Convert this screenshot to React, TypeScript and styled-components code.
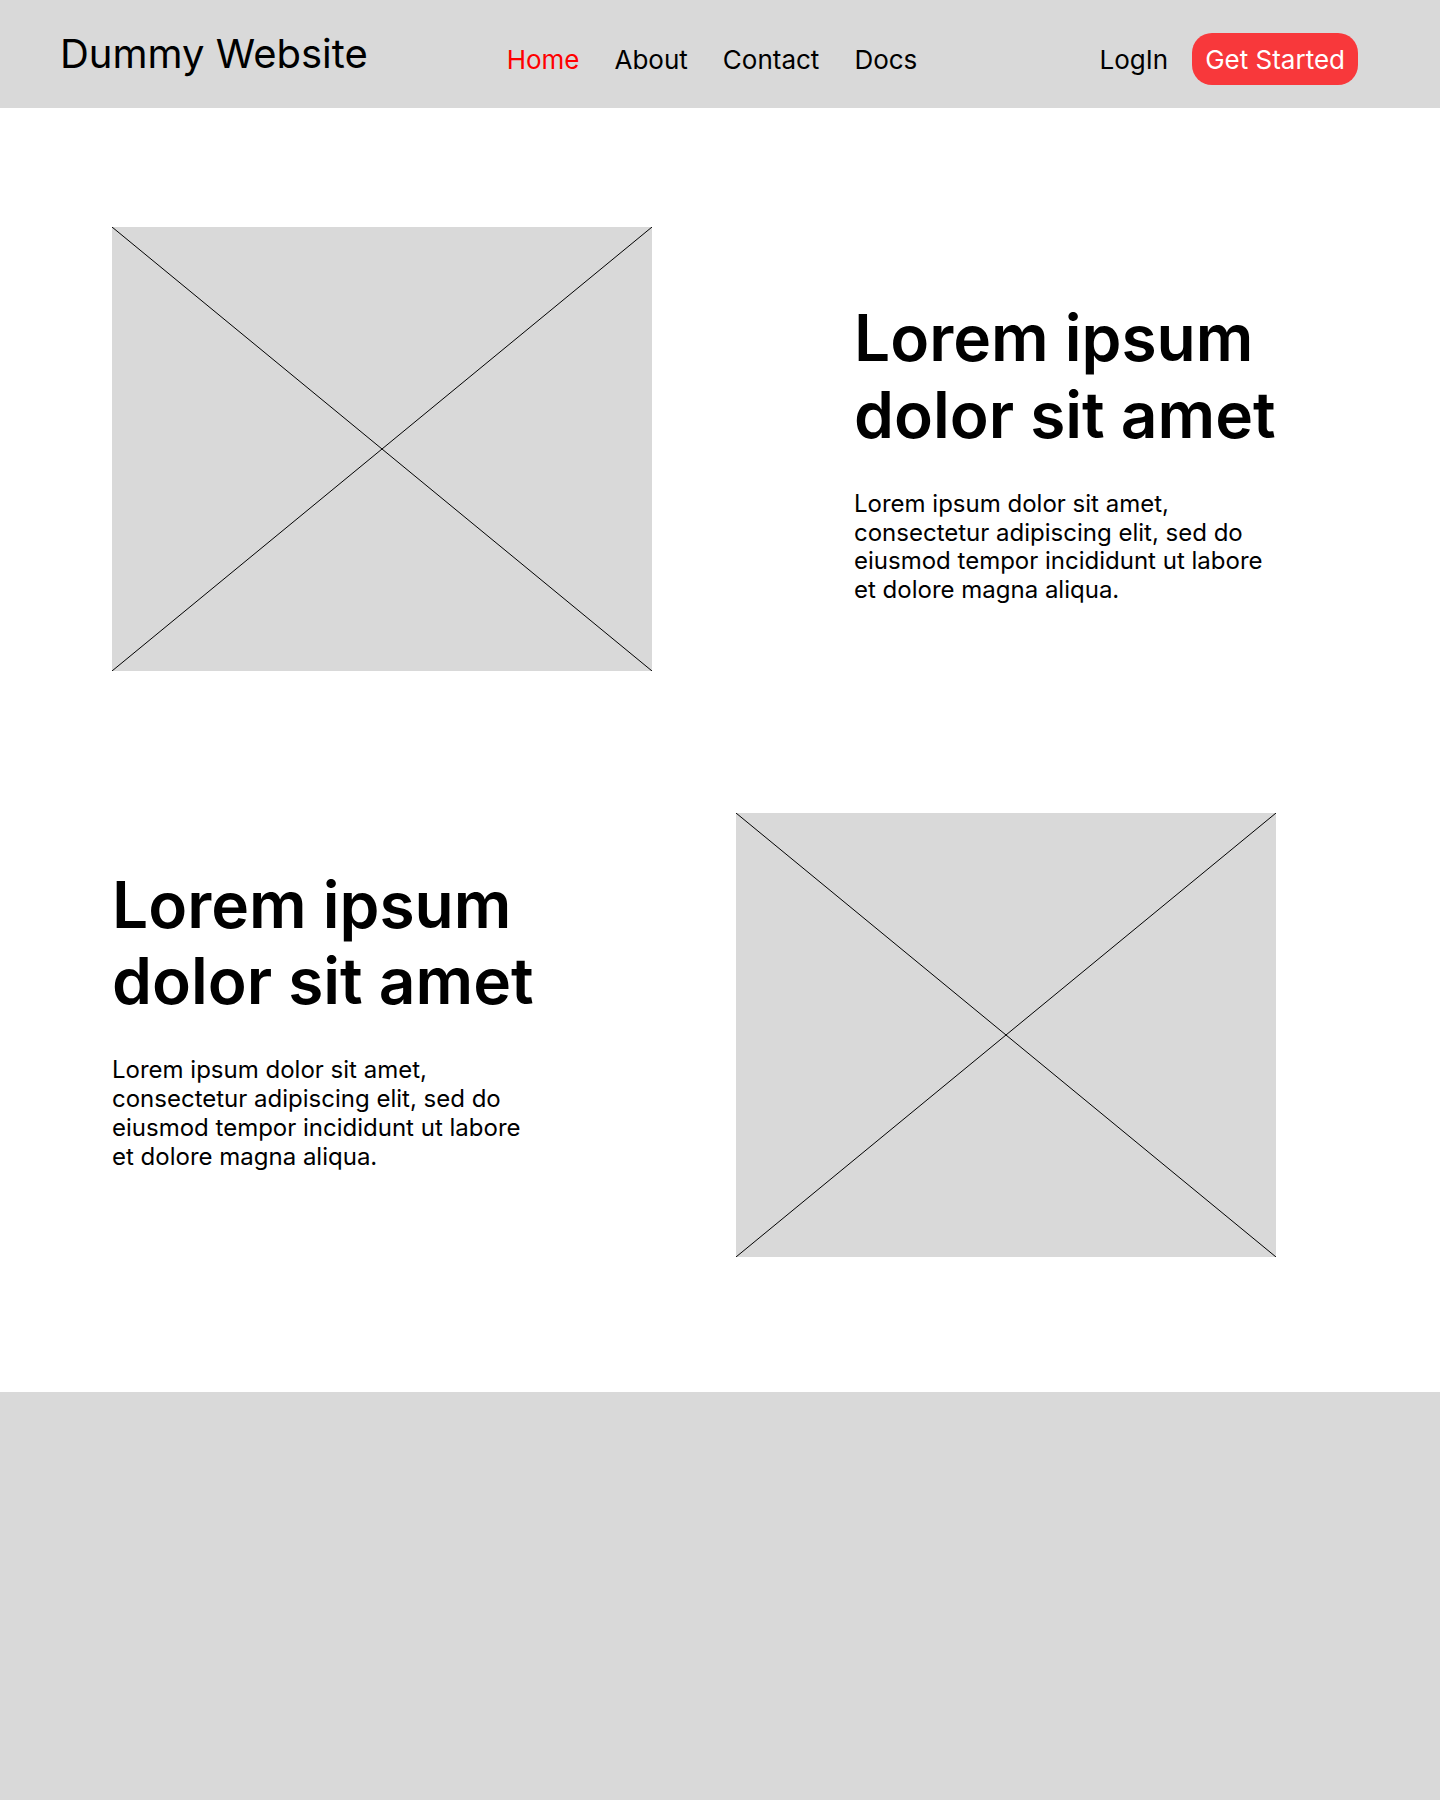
import styled, { createGlobalStyle } from 'styled-components';

const GlobalStyle = createGlobalStyle`
  * {
    box-sizing: border-box;
  }
  body {
    margin: 0;
    font-family: Inter, "Noto Sans", sans-serif;
    color: #000;
    background: #fff;
  }
`;

const Page = styled.div`
  display: flex;
  flex-direction: column;
  min-height: 1800px;
`;

const Header = styled.header`
  display: grid;
  grid-template-columns: 1fr auto 1fr;
  align-items: center;
  height: 108px;
  padding: 10px 82px 0 60px;
  background: #d9d9d9;
`;

const Logo = styled.div`
  font-size: 40px;
  font-weight: 400;
  margin-top: -12px;
`;

const Nav = styled.nav`
  display: flex;
  gap: 35px;
  margin-left: 6px;
`;

const NavLink = styled.a<{ $active?: boolean }>`
  font-size: 26px;
  color: ${({ $active }) => ($active ? '#ff0000' : '#000')};
  text-decoration: none;
  cursor: pointer;
`;

const Actions = styled.div`
  display: flex;
  align-items: center;
  justify-content: flex-end;
  gap: 24px;
`;

const LoginLink = styled.a`
  font-size: 26px;
  color: #000;
  cursor: pointer;
`;

const StartButton = styled.button`
  height: 52px;
  padding: 0 13px;
  border: none;
  border-radius: 20px;
  background: #f8383b;
  color: #fff;
  font-family: inherit;
  font-size: 26px;
  cursor: pointer;
`;

const Main = styled.main`
  display: flex;
  flex-direction: column;
  gap: 142px;
  padding: 119px 164px 135px 112px;
`;

const Row = styled.section`
  display: flex;
  align-items: center;
  justify-content: space-between;
`;

const Placeholder = styled.svg`
  display: block;
  width: 540px;
  height: 444px;
  flex-shrink: 0;
  background: #d9d9d9;
`;

// $lift moves the centred text block up (positive) or down (negative)
const TextBlock = styled.div<{ $lift?: number }>`
  width: 422px;
  margin-bottom: ${({ $lift = 0 }) => $lift * 2}px;
`;

const Heading = styled.h2`
  margin: 0 0 36px;
  font-size: 64px;
  font-weight: 600;
  line-height: 1.2;
`;

const Body = styled.p`
  margin: 0;
  font-size: 24px;
  line-height: 1.2;
`;

const Footer = styled.footer`
  flex: 1;
  background: #d9d9d9;
`;

const ImageBox = () => (
  <Placeholder viewBox="0 0 540 444" preserveAspectRatio="none">
    <line x1="0" y1="0" x2="540" y2="444" stroke="#000" strokeWidth="1" />
    <line x1="540" y1="0" x2="0" y2="444" stroke="#000" strokeWidth="1" />
  </Placeholder>
);

const Copy = ({ lift }: { lift?: number }) => (
  <TextBlock $lift={lift}>
    <Heading>Lorem ipsum dolor sit amet</Heading>
    <Body>
      Lorem ipsum dolor sit amet, consectetur adipiscing elit, sed do eiusmod tempor incididunt ut
      labore et dolore magna aliqua.
    </Body>
  </TextBlock>
);

const App = () => {
  return (
    <Page>
      <GlobalStyle />
      <Header>
        <Logo>Dummy Website</Logo>
        <Nav>
          <NavLink $active>Home</NavLink>
          <NavLink>About</NavLink>
          <NavLink>Contact</NavLink>
          <NavLink>Docs</NavLink>
        </Nav>
        <Actions>
          <LoginLink>LogIn</LoginLink>
          <StartButton>Get Started</StartButton>
        </Actions>
      </Header>
      <Main>
        <Row>
          <ImageBox />
          <Copy lift={-3.5} />
        </Row>
        <Row>
          <Copy lift={16} />
          <ImageBox />
        </Row>
      </Main>
      <Footer />
    </Page>
  );
};

export default App;
